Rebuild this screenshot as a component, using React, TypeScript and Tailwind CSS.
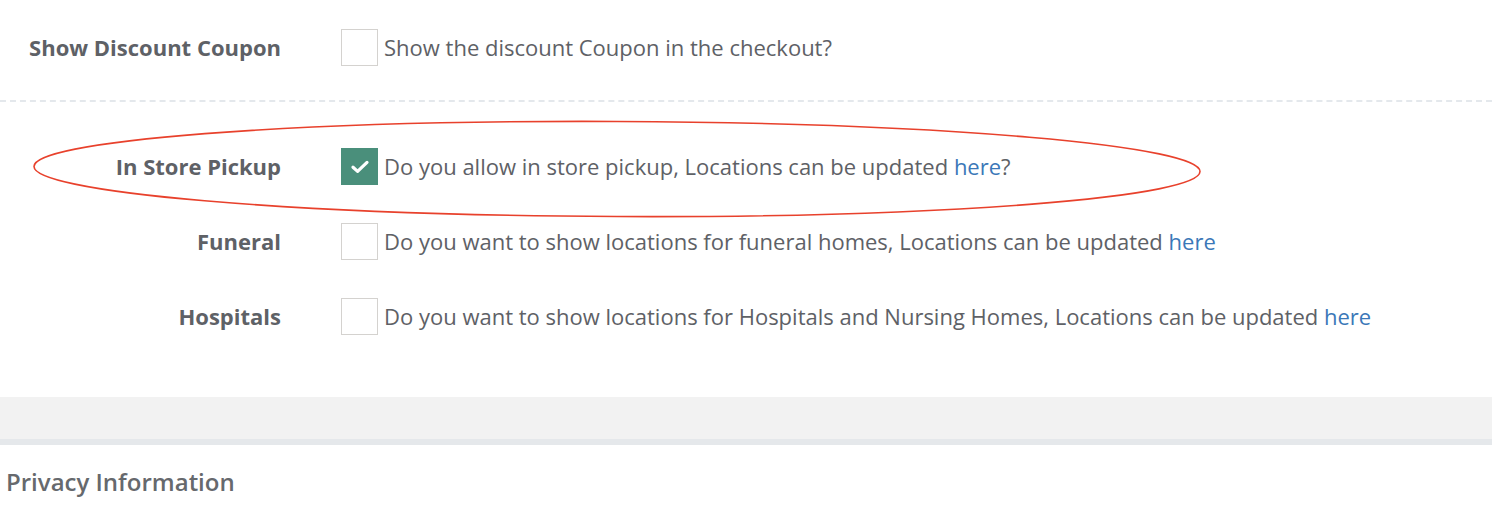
import React, { useState } from 'react';

interface Setting {
  id: string;
  label: string;
  text: string;
  link?: string;
  suffix?: string;
}

const font = { fontFamily: '"Open Sans", "Liberation Sans", sans-serif' };

const CheckBox: React.FC<{ checked: boolean; onToggle: () => void }> = ({ checked, onToggle }) => (
  <button
    type="button"
    onClick={onToggle}
    className={`flex h-[37px] w-[37px] shrink-0 items-center justify-center border ${
      checked ? 'border-[#4a8f7b] bg-[#4a8f7b]' : 'border-[#d4d2cf] bg-white'
    }`}
  >
    {checked && (
      <svg width="20" height="16" viewBox="0 0 20 16" fill="none">
        <path d="M3 8.2 L7.6 12.4 L17 3.4" stroke="white" strokeWidth="3.2" strokeLinecap="round" strokeLinejoin="round" />
      </svg>
    )}
  </button>
);

const Row: React.FC<{ s: Setting; checked: boolean; onToggle: () => void }> = ({ s, checked, onToggle }) => (
  <div className="flex items-center">
    <div className="w-[281px] shrink-0 text-right text-[22px] font-bold text-[#5e6166]">{s.label}</div>
    <div className="ml-[60px] flex items-center">
      <CheckBox checked={checked} onToggle={onToggle} />
      <span className="ml-[6px] text-[22px] text-[#5e6166]">
        {s.text}
        {s.link && <a href="#" className="text-[#3b78b8]">{s.link}</a>}
        {s.suffix}
      </span>
    </div>
  </div>
);

export default function App() {
  const [checked, setChecked] = useState<Record<string, boolean>>({
    coupon: false,
    pickup: true,
    funeral: false,
    hospitals: false,
  });

  const toggle = (id: string) => setChecked(prev => ({ ...prev, [id]: !prev[id] }));

  const coupon: Setting = { id: 'coupon', label: 'Show Discount Coupon', text: 'Show the discount Coupon in the checkout?' };
  const locations: Setting[] = [
    { id: 'pickup', label: 'In Store Pickup', text: 'Do you allow in store pickup, Locations can be updated ', link: 'here', suffix: '?' },
    { id: 'funeral', label: 'Funeral', text: 'Do you want to show locations for funeral homes, Locations can be updated ', link: 'here' },
    { id: 'hospitals', label: 'Hospitals', text: 'Do you want to show locations for Hospitals and Nursing Homes, Locations can be updated ', link: 'here' },
  ];

  return (
    <div className="relative min-h-[508px] w-full overflow-hidden bg-white" style={font}>
      <div className="pt-[29px]">
        <Row s={coupon} checked={checked.coupon} onToggle={() => toggle('coupon')} />
      </div>

      <div className="mt-[34px] border-t-2 border-dashed border-[#e4e8ec]" />

      <div className="flex flex-col gap-[38px] pt-[46px] pb-[62px]">
        {locations.map(s => (
          <Row key={s.id} s={s} checked={checked[s.id]} onToggle={() => toggle(s.id)} />
        ))}
      </div>

      <div className="h-[42px] bg-[#f2f2f2]" />
      <div className="h-[6px] bg-[#e5e8eb]" />

      <h2 className="px-[6px] pt-[19px] text-[24px] font-semibold text-[#66696d]">Privacy Information</h2>

      {/* hand-drawn highlight around the pickup row */}
      <svg className="pointer-events-none absolute left-0 top-0" width="1492" height="508">
        <ellipse cx="617" cy="169" rx="583" ry="47.5" fill="none" stroke="#e8412c" strokeWidth="1.6" transform="rotate(0.25 617 169)" />
      </svg>
    </div>
  );
}
